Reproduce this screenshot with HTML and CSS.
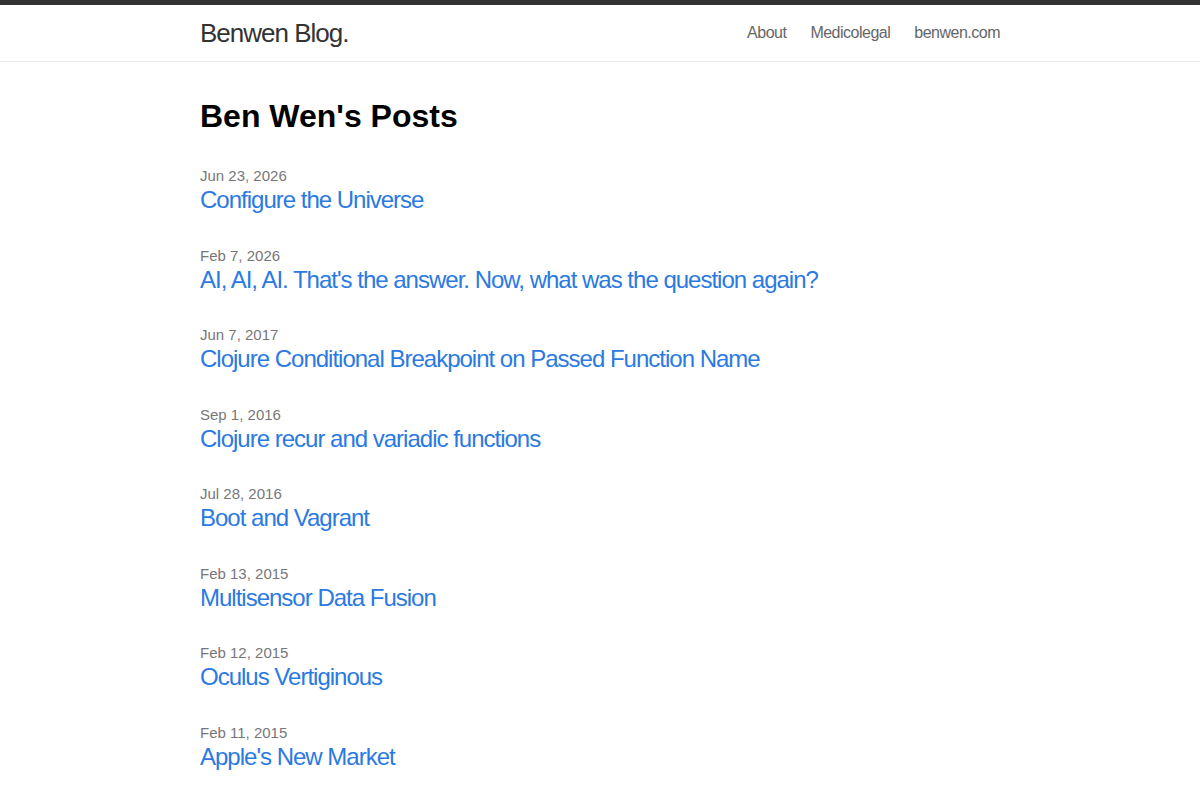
FILE: index.html
```html
<!DOCTYPE html>
<html lang="en">
<head>
<meta charset="utf-8">
<title>Benwen Blog.</title>
<link rel="stylesheet" href="styles.css">
</head>
<body>
<header class="site-header">
  <div class="wrapper header-row">
    <a class="site-title" href="#">Benwen Blog.</a>
    <nav class="site-nav">
      <a class="page-link" href="#">About</a>
      <a class="page-link" href="#">Medicolegal</a>
      <a class="page-link" href="#">benwen.com</a>
    </nav>
  </div>
</header>
<main class="page-content">
  <div class="wrapper">
    <h1 class="page-heading">Ben Wen's Posts</h1>
    <ul class="post-list">
      <li><span class="post-meta">Jun 23, 2026</span><a class="post-link" href="#">Configure the Universe</a></li>
      <li><span class="post-meta">Feb 7, 2026</span><a class="post-link" href="#">AI, AI, AI. That's the answer. Now, what was the question again?</a></li>
      <li><span class="post-meta">Jun 7, 2017</span><a class="post-link" href="#">Clojure Conditional Breakpoint on Passed Function Name</a></li>
      <li><span class="post-meta">Sep 1, 2016</span><a class="post-link" href="#">Clojure recur and variadic functions</a></li>
      <li><span class="post-meta">Jul 28, 2016</span><a class="post-link" href="#">Boot and Vagrant</a></li>
      <li><span class="post-meta">Feb 13, 2015</span><a class="post-link" href="#">Multisensor Data Fusion</a></li>
      <li><span class="post-meta">Feb 12, 2015</span><a class="post-link" href="#">Oculus Vertiginous</a></li>
      <li><span class="post-meta">Feb 11, 2015</span><a class="post-link" href="#">Apple's New Market</a></li>
    </ul>
  </div>
</main>
</body>
</html>
```
FILE: styles.css
```css
* { box-sizing: border-box; }
html, body { margin: 0; padding: 0; }
body {
  font-family: "Liberation Sans", Arial, Helvetica, sans-serif;
  color: #111;
  background: #fff;
  font-size: 16px;
  line-height: 1.5;
}
a { text-decoration: none; }
.wrapper {
  width: 800px;
  margin: 0 auto;
}
.site-header {
  border-top: 5px solid #333;
  border-bottom: 1px solid #e8e8e8;
}
.header-row {
  display: flex;
  justify-content: space-between;
  align-items: center;
  height: 56px;
}
.site-title {
  font-size: 26px;
  letter-spacing: -1px;
  color: #333;
  line-height: 56px;
}
.site-nav {
  display: flex;
  gap: 24px;
}
.page-link {
  color: #666;
  font-size: 16px;
  letter-spacing: -0.5px;
  line-height: 56px;
}
.page-content {
  padding-top: 30px;
}
.page-heading {
  font-size: 32px;
  font-weight: bold;
  color: #000;
  margin: 0 0 25px;
  line-height: 48px;
}
.post-list {
  list-style: none;
  margin: 0;
  padding: 0;
}
.post-list li {
  margin-bottom: 31.5px;
  display: flex;
  flex-direction: column;
  align-items: flex-start;
}
.post-meta {
  font-size: 15px;
  color: #777;
  line-height: 21px;
}
.post-link {
  font-size: 24px;
  letter-spacing: -1px;
  color: #2a7ae2;
  line-height: 27px;
}
```
